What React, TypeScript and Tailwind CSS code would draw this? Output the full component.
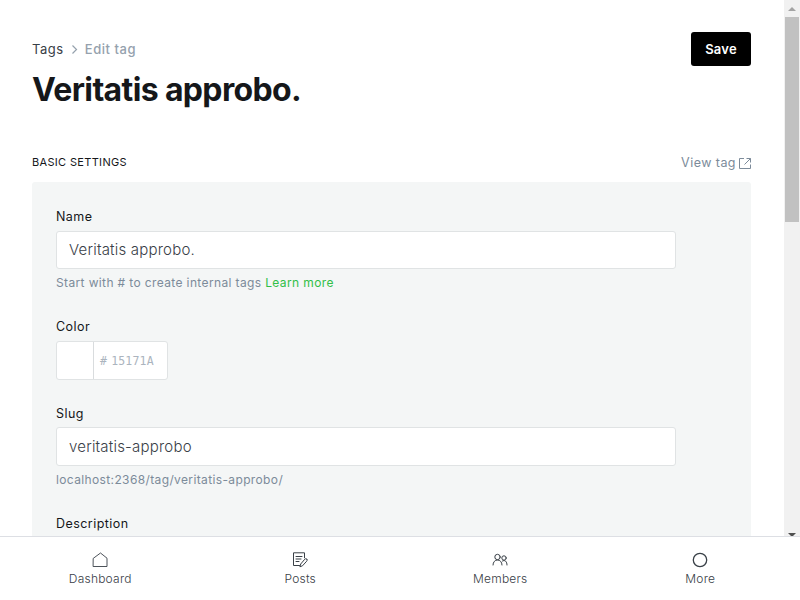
import React from "react";

function Field({ label, hint, children }: { label: string; hint?: React.ReactNode; children: React.ReactNode }) {
  return (
    <div className="flex flex-col">
      <label className="mb-[5px] h-5 pt-px text-[12.5px] leading-5 tracking-[0.45px] text-[#15171a]">{label}</label>
      {children}
      {hint && <p className="mt-1 h-5 text-[12px] leading-[19px] tracking-[0.37px] text-[#7c8b9a]">{hint}</p>}
    </div>
  );
}

function TextInput({ value, className }: { value: string; className: string }) {
  return (
    <input
      readOnly
      value={value}
      className={`${className} w-[620px] rounded-[3px] border border-[#e0e3e4] bg-white px-3 text-[15px] font-light tracking-[0.2px] text-[#394047] outline-none`}
    />
  );
}

function NavItem({ label, children }: { label: string; children: React.ReactNode }) {
  return (
    <a className="flex w-[200px] flex-col items-center pt-[15px] text-[#394047]">
      <svg width="16" height="16" viewBox="0 0 16 16" fill="none" stroke="currentColor" strokeLinecap="round" strokeLinejoin="round">
        {children}
      </svg>
      <span className="mt-px pl-[0.5px] text-[12px] font-light leading-5 tracking-[0.22px]">{label}</span>
    </a>
  );
}

function Scrollbar() {
  return (
    <div className="flex w-4 shrink-0 flex-col items-center bg-[#f1f1f1]">
      <svg width="16" height="17" viewBox="0 0 16 17" fill="#a3a3a3">
        <path d="M4 11 8 7l4 4z" />
      </svg>
      <div className="h-[205px] w-[14px] bg-[#c1c1c1]" />
      <svg className="mt-auto" width="16" height="3" viewBox="0 0 16 3" fill="#505050">
        <path d="M4 0h8L9 3H7z" />
      </svg>
    </div>
  );
}

export default function App() {
  return (
    <div className="flex h-[600px] w-[800px] flex-col overflow-hidden bg-white font-['Inter',sans-serif]">
      <div className="flex h-[536px] overflow-hidden">
        <main className="min-w-0 flex-1 pl-8 pr-[33px] pt-8">
          <header className="flex h-[120px] items-start justify-between">
            <div>
              <nav className="mt-[7px] flex h-5 items-center text-[13px] leading-5 tracking-[0.55px]">
                <a className="text-[#394047]">Tags</a>
                <svg className="mx-[7px]" width="7" height="9" viewBox="0 0 7 9" fill="none" stroke="#95a1ad" strokeWidth="1.200">
                  <path d="m1.500.5 4 4-4 4" />
                </svg>
                <span className="font-medium text-[#95a1ad]">Edit tag</span>
              </nav>
              <h1 className="mt-[10px] text-[32px] font-bold leading-[42px] tracking-[-0.64px] text-[#15171a]">Veritatis approbo.</h1>
            </div>
            <button className="h-[34px] w-[60px] rounded-[3px] bg-black pt-[2px] text-[13px] font-semibold tracking-[0.2px] text-white">Save</button>
          </header>
          <div className="flex h-[30px] items-start justify-between">
            <h4 className="text-[11px] leading-5 tracking-[0.33px] text-[#15171a]">BASIC SETTINGS</h4>
            <a className="flex items-center gap-[3px] text-[12.5px] leading-5 tracking-[0.45px] text-[#7c8b9a]">
              <span className="pt-px">View tag</span>
              <svg className="mt-px" width="12" height="13" viewBox="0 0 12 13" fill="none" stroke="currentColor">
                <path d="M5 1.500H.5v10h11v-4M7.500 1.500h4v4M11.500 1.500l-6 6" />
              </svg>
            </a>
          </div>
          <section className="h-[420px] rounded-[3px] bg-[#f4f6f6] px-6 pt-6">
            <div className="flex flex-col">
              <Field
                label="Name"
                hint={<>Start with # to create internal tags <a className="text-[#32bf48]">Learn more</a></>}
              >
                <TextInput value="Veritatis approbo." className="h-[38px] pb-px" />
              </Field>
              <div className="mt-[23px]">
                <Field label="Color">
                  <div className="flex h-[39px] w-[112px] rounded-[3px] border border-[#e0e3e4] bg-white">
                    <div className="w-[37px] border-r border-[#d9dcde]" />
                    <div className="flex items-center pl-[6px] pt-[2px] font-['DejaVu_Sans_Mono',monospace] text-[11.500px] tracking-[0.2px] text-[#abb4be]">
                      <span className="mr-1">#</span>15171A
                    </div>
                  </div>
                </Field>
              </div>
              <div className="mt-[23px]">
                <Field label="Slug" hint="localhost:2368/tag/veritatis-approbo/">
                  <TextInput value="veritatis-approbo" className="-mt-px h-[39px] pb-px" />
                </Field>
              </div>
              <div className="mt-[24px] text-[12.5px] leading-5 tracking-[0.45px] text-[#15171a]">Description</div>
            </div>
          </section>
        </main>
        <Scrollbar />
      </div>
      <footer className="flex h-16 border-t border-[#dddfe4] bg-white">
        <NavItem label="Dashboard">
          <path d="M1.500 6.200 8.500 1l6.500 5.200v8.300h-13.500z" strokeWidth=".9" />
        </NavItem>
        <NavItem label="Posts">
          <path d="M7.500 13.500H1.500V.8h11v5M4 4.500h6M4 7h5M4 9.500h3M14.800 7.200c-.8-.8-1.500-.5-2 0L8.700 12l-.8 2.800 2.600-1 4.200-4.600c.5-.6.6-1.400.1-2z" />
        </NavItem>
        <NavItem label="Members">
          <circle cx="5.500" cy="5" r="2.700" />
          <circle cx="12" cy="6" r="2.200" />
          <path d="M1 13c0-3 2-5 4.500-5s4.500 2 4.500 5M10.500 9c2.500-1.500 4.500.5 4.500 4" />
        </NavItem>
        <NavItem label="More">
          <circle cx="8" cy="8" r="6.700" strokeWidth="1.300" />
        </NavItem>
      </footer>
    </div>
  );
}
